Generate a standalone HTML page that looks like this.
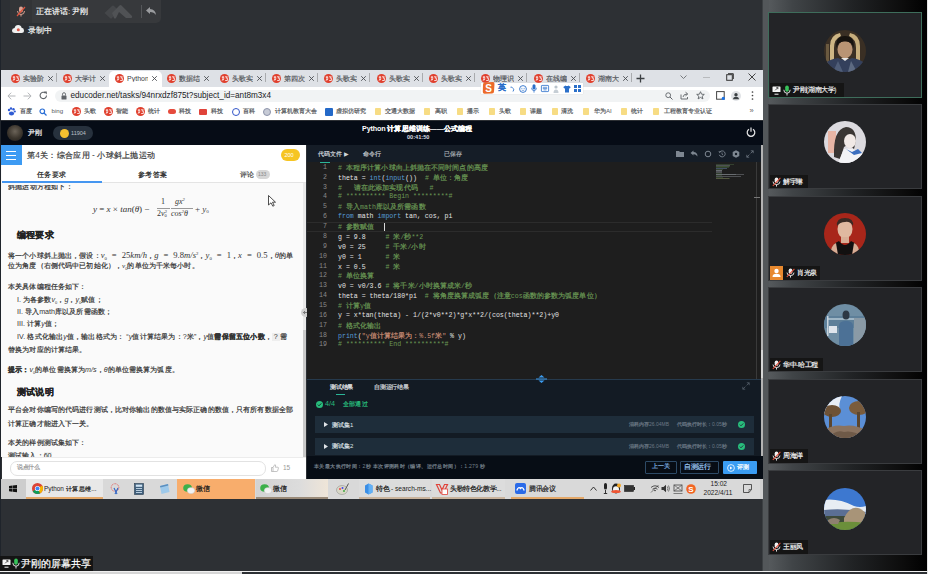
<!DOCTYPE html>
<html><head><meta charset="utf-8">
<style>
*{margin:0;padding:0;box-sizing:border-box}
html,body{width:928px;height:574px;overflow:hidden;background:#2d3034;font-family:"Liberation Sans",sans-serif;color:#fff}
.a{position:absolute}
.t{position:absolute;white-space:nowrap;line-height:1}
svg{position:absolute;overflow:visible}
k{display:inline-block;width:calc(1em + var(--ls,0px));text-align:center;font-style:normal;-webkit-text-stroke:0.2px currentColor}
.fav{position:absolute;width:8px;height:8px;border-radius:50%;background:#e2412f}
.fav:after{content:"";position:absolute;left:1.6px;top:2.2px;width:4.8px;height:3.4px;border:0.9px solid #f6d6d0;border-radius:1.5px}
.code{position:absolute;left:338px;font-family:"Liberation Mono",monospace;font-size:6.58px;line-height:1;white-space:pre;color:#e2e2e2}
.ln{position:absolute;width:20px;left:307px;text-align:right;font-family:"Liberation Mono",monospace;font-size:6.58px;line-height:1;color:#8a8a8a}
.cm{color:#6a9955}
.kw{color:#569cd6}
.st{color:#ce9178}
.mu{position:absolute}
</style></head><body>

<div class="a" style="left:10px;top:0px;width:151px;height:22.5px;background:#37393c;border-radius:0 0 5px 5px"></div>
<div class="a" style="left:10px;top:0px;width:21.5px;height:22.5px;background:#323437;border-radius:0 0 0 5px"></div>
<svg style="left:16px;top:6px" width="10" height="11" viewBox="0 0 10 11"><rect x="3" y="0.5" width="4" height="6" rx="2" fill="#d9a394"/><path d="M1.5 5 Q1.5 8.5 5 8.5 Q8.5 8.5 8.5 5" stroke="#d9a394" fill="none" stroke-width="1"/><path d="M5 8.5 V10.5" stroke="#d9a394" stroke-width="1"/><path d="M1 10 L9 1" stroke="#e0533d" stroke-width="1.2"/></svg>
<div class="t" style="left:36px;top:8px;font-size:8px;color:#f6f6f6;"><k>正</k><k>在</k><k>讲</k><k>话</k>: <k>尹</k><k>刚</k></div>
<svg style="left:104px;top:4px" width="29" height="15" viewBox="0 0 29 15"><path d="M0.5 9 L8 2 Q9 1 10 2 L14 6 L8 14 Q7 15 6 14Z" fill="#45474a"/><path d="M8 9 L15.5 1.5 Q16.5 0.5 17.5 1.5 L28 12 Q28.5 13 27.5 14 L22 14 L15 8 L12 14 Q11 15 10 14Z" fill="#505255"/></svg>
<div class="a" style="left:141px;top:5px;width:1px;height:13px;background:#55575a;"></div>
<svg style="left:146px;top:7px" width="10" height="8" viewBox="0 0 10 8"><path d="M4 0 L0 3.5 L4 7 V5 Q8 5 10 8 Q9.5 2.5 4 2Z" fill="#9a9c9f"/></svg>
<svg style="left:12px;top:25px" width="12" height="8" viewBox="0 0 12 8"><path d="M3 8 Q0 8 0 5.5 Q0 3.2 2.6 3 Q3.2 0 6.2 0 Q9 0 9.6 2.8 Q12 3 12 5.5 Q12 8 9.5 8Z" fill="#f0f0f0"/><circle cx="6.3" cy="4.8" r="1.5" fill="#e05a4a"/></svg>
<div class="t" style="left:28px;top:26.8px;font-size:8px;color:#f0f0f0;"><k>录</k><k>制</k><k>中</k></div>
<div class="a" style="left:0px;top:70px;width:763px;height:17px;background:#dee1e6;"></div>
<svg style="left:10.5px;top:73.5px" width="9" height="9" viewBox="0 0 9 9"><circle cx="4.5" cy="4.5" r="4.5" fill="#e0402e"/><path d="M1.8 3.2H4.2M3 2V6.3M1.8 6.3L4.2 4.8M5 2.8H7.3L6.3 4.2H7.4V6.5H5.2" stroke="#fff" fill="none" stroke-width="0.8"/></svg>
<div class="t" style="left:22.5px;top:74.5px;font-size:7px;color:#55585c;width:21px;overflow:hidden"><k>实</k><k>验</k><k>阶</k><k>段</k></div>
<svg style="left:46.5px;top:74.5px" width="7" height="7" viewBox="0 0 7 7"><path d="M1.2 1.2L5.8 5.8M5.8 1.2L1.2 5.8" stroke="#4a4d51" stroke-width="0.9"/></svg>
<div class="a" style="left:55.5px;top:73px;width:1px;height:9px;background:#a9abae;"></div>
<svg style="left:62.8px;top:73.5px" width="9" height="9" viewBox="0 0 9 9"><circle cx="4.5" cy="4.5" r="4.5" fill="#e0402e"/><path d="M1.8 3.2H4.2M3 2V6.3M1.8 6.3L4.2 4.8M5 2.8H7.3L6.3 4.2H7.4V6.5H5.2" stroke="#fff" fill="none" stroke-width="0.8"/></svg>
<div class="t" style="left:74.8px;top:74.5px;font-size:7px;color:#55585c;width:21px;overflow:hidden"><k>大</k><k>学</k><k>计</k><k>算</k></div>
<svg style="left:98.8px;top:74.5px" width="7" height="7" viewBox="0 0 7 7"><path d="M1.2 1.2L5.8 5.8M5.8 1.2L1.2 5.8" stroke="#4a4d51" stroke-width="0.9"/></svg>
<div class="a" style="left:109px;top:70.5px;width:53px;height:17px;background:#fff;border-radius:5px 5px 0 0"></div>
<svg style="left:115.1px;top:73.5px" width="9" height="9" viewBox="0 0 9 9"><circle cx="4.5" cy="4.5" r="4.5" fill="#e0402e"/><path d="M1.8 3.2H4.2M3 2V6.3M1.8 6.3L4.2 4.8M5 2.8H7.3L6.3 4.2H7.4V6.5H5.2" stroke="#fff" fill="none" stroke-width="0.8"/></svg>
<div class="t" style="left:127.1px;top:74.5px;font-size:7px;color:#3c4043;width:21px;overflow:hidden">Python</div>
<svg style="left:151.1px;top:74.5px" width="7" height="7" viewBox="0 0 7 7"><path d="M1.2 1.2L5.8 5.8M5.8 1.2L1.2 5.8" stroke="#4a4d51" stroke-width="0.9"/></svg>
<svg style="left:167.4px;top:73.5px" width="9" height="9" viewBox="0 0 9 9"><circle cx="4.5" cy="4.5" r="4.5" fill="#e0402e"/><path d="M1.8 3.2H4.2M3 2V6.3M1.8 6.3L4.2 4.8M5 2.8H7.3L6.3 4.2H7.4V6.5H5.2" stroke="#fff" fill="none" stroke-width="0.8"/></svg>
<div class="t" style="left:179.4px;top:74.5px;font-size:7px;color:#55585c;width:21px;overflow:hidden"><k>数</k><k>据</k><k>结</k><k>构</k></div>
<svg style="left:203.4px;top:74.5px" width="7" height="7" viewBox="0 0 7 7"><path d="M1.2 1.2L5.8 5.8M5.8 1.2L1.2 5.8" stroke="#4a4d51" stroke-width="0.9"/></svg>
<svg style="left:219.7px;top:73.5px" width="9" height="9" viewBox="0 0 9 9"><circle cx="4.5" cy="4.5" r="4.5" fill="#e0402e"/><path d="M1.8 3.2H4.2M3 2V6.3M1.8 6.3L4.2 4.8M5 2.8H7.3L6.3 4.2H7.4V6.5H5.2" stroke="#fff" fill="none" stroke-width="0.8"/></svg>
<div class="t" style="left:231.7px;top:74.5px;font-size:7px;color:#55585c;width:21px;overflow:hidden"><k>头</k><k>歌</k><k>实</k><k>践</k></div>
<svg style="left:255.7px;top:74.5px" width="7" height="7" viewBox="0 0 7 7"><path d="M1.2 1.2L5.8 5.8M5.8 1.2L1.2 5.8" stroke="#4a4d51" stroke-width="0.9"/></svg>
<div class="a" style="left:264.7px;top:73px;width:1px;height:9px;background:#a9abae;"></div>
<svg style="left:272.0px;top:73.5px" width="9" height="9" viewBox="0 0 9 9"><circle cx="4.5" cy="4.5" r="4.5" fill="#e0402e"/><path d="M1.8 3.2H4.2M3 2V6.3M1.8 6.3L4.2 4.8M5 2.8H7.3L6.3 4.2H7.4V6.5H5.2" stroke="#fff" fill="none" stroke-width="0.8"/></svg>
<div class="t" style="left:284.0px;top:74.5px;font-size:7px;color:#55585c;width:21px;overflow:hidden"><k>第</k><k>四</k><k>次</k><k>课</k></div>
<svg style="left:308.0px;top:74.5px" width="7" height="7" viewBox="0 0 7 7"><path d="M1.2 1.2L5.8 5.8M5.8 1.2L1.2 5.8" stroke="#4a4d51" stroke-width="0.9"/></svg>
<div class="a" style="left:317.0px;top:73px;width:1px;height:9px;background:#a9abae;"></div>
<svg style="left:324.3px;top:73.5px" width="9" height="9" viewBox="0 0 9 9"><circle cx="4.5" cy="4.5" r="4.5" fill="#e0402e"/><path d="M1.8 3.2H4.2M3 2V6.3M1.8 6.3L4.2 4.8M5 2.8H7.3L6.3 4.2H7.4V6.5H5.2" stroke="#fff" fill="none" stroke-width="0.8"/></svg>
<div class="t" style="left:336.3px;top:74.5px;font-size:7px;color:#55585c;width:21px;overflow:hidden"><k>头</k><k>歌</k><k>实</k><k>践</k></div>
<svg style="left:360.3px;top:74.5px" width="7" height="7" viewBox="0 0 7 7"><path d="M1.2 1.2L5.8 5.8M5.8 1.2L1.2 5.8" stroke="#4a4d51" stroke-width="0.9"/></svg>
<div class="a" style="left:369.3px;top:73px;width:1px;height:9px;background:#a9abae;"></div>
<svg style="left:376.6px;top:73.5px" width="9" height="9" viewBox="0 0 9 9"><circle cx="4.5" cy="4.5" r="4.5" fill="#e0402e"/><path d="M1.8 3.2H4.2M3 2V6.3M1.8 6.3L4.2 4.8M5 2.8H7.3L6.3 4.2H7.4V6.5H5.2" stroke="#fff" fill="none" stroke-width="0.8"/></svg>
<div class="t" style="left:388.6px;top:74.5px;font-size:7px;color:#55585c;width:21px;overflow:hidden"><k>头</k><k>歌</k><k>实</k><k>践</k></div>
<svg style="left:412.6px;top:74.5px" width="7" height="7" viewBox="0 0 7 7"><path d="M1.2 1.2L5.8 5.8M5.8 1.2L1.2 5.8" stroke="#4a4d51" stroke-width="0.9"/></svg>
<div class="a" style="left:421.6px;top:73px;width:1px;height:9px;background:#a9abae;"></div>
<svg style="left:428.9px;top:73.5px" width="9" height="9" viewBox="0 0 9 9"><circle cx="4.5" cy="4.5" r="4.5" fill="#e0402e"/><path d="M1.8 3.2H4.2M3 2V6.3M1.8 6.3L4.2 4.8M5 2.8H7.3L6.3 4.2H7.4V6.5H5.2" stroke="#fff" fill="none" stroke-width="0.8"/></svg>
<div class="t" style="left:440.9px;top:74.5px;font-size:7px;color:#55585c;width:21px;overflow:hidden"><k>头</k><k>歌</k><k>实</k><k>践</k></div>
<svg style="left:464.9px;top:74.5px" width="7" height="7" viewBox="0 0 7 7"><path d="M1.2 1.2L5.8 5.8M5.8 1.2L1.2 5.8" stroke="#4a4d51" stroke-width="0.9"/></svg>
<div class="a" style="left:473.9px;top:73px;width:1px;height:9px;background:#a9abae;"></div>
<svg style="left:481.2px;top:73.5px" width="9" height="9" viewBox="0 0 9 9"><circle cx="4.5" cy="4.5" r="4.5" fill="#e0402e"/><path d="M1.8 3.2H4.2M3 2V6.3M1.8 6.3L4.2 4.8M5 2.8H7.3L6.3 4.2H7.4V6.5H5.2" stroke="#fff" fill="none" stroke-width="0.8"/></svg>
<div class="t" style="left:493.2px;top:74.5px;font-size:7px;color:#55585c;width:21px;overflow:hidden"><k>物</k><k>理</k><k>识</k><k>别</k></div>
<svg style="left:517.2px;top:74.5px" width="7" height="7" viewBox="0 0 7 7"><path d="M1.2 1.2L5.8 5.8M5.8 1.2L1.2 5.8" stroke="#4a4d51" stroke-width="0.9"/></svg>
<div class="a" style="left:526.2px;top:73px;width:1px;height:9px;background:#a9abae;"></div>
<svg style="left:533.5px;top:73.5px" width="9" height="9" viewBox="0 0 9 9"><circle cx="4.5" cy="4.5" r="4.5" fill="#e0402e"/><path d="M1.8 3.2H4.2M3 2V6.3M1.8 6.3L4.2 4.8M5 2.8H7.3L6.3 4.2H7.4V6.5H5.2" stroke="#fff" fill="none" stroke-width="0.8"/></svg>
<div class="t" style="left:545.5px;top:74.5px;font-size:7px;color:#55585c;width:21px;overflow:hidden"><k>在</k><k>线</k><k>编</k><k>程</k></div>
<svg style="left:569.5px;top:74.5px" width="7" height="7" viewBox="0 0 7 7"><path d="M1.2 1.2L5.8 5.8M5.8 1.2L1.2 5.8" stroke="#4a4d51" stroke-width="0.9"/></svg>
<div class="a" style="left:578.5px;top:73px;width:1px;height:9px;background:#a9abae;"></div>
<svg style="left:585.8px;top:73.5px" width="9" height="9" viewBox="0 0 9 9"><circle cx="4.5" cy="4.5" r="4.5" fill="#e0402e"/><path d="M1.8 3.2H4.2M3 2V6.3M1.8 6.3L4.2 4.8M5 2.8H7.3L6.3 4.2H7.4V6.5H5.2" stroke="#fff" fill="none" stroke-width="0.8"/></svg>
<div class="t" style="left:597.8px;top:74.5px;font-size:7px;color:#55585c;width:21px;overflow:hidden"><k>湖</k><k>南</k><k>大</k><k>学</k></div>
<svg style="left:621.8px;top:74.5px" width="7" height="7" viewBox="0 0 7 7"><path d="M1.2 1.2L5.8 5.8M5.8 1.2L1.2 5.8" stroke="#4a4d51" stroke-width="0.9"/></svg>
<div class="a" style="left:630.8px;top:73px;width:1px;height:9px;background:#a9abae;"></div>
<svg style="left:636px;top:73.5px" width="9" height="9" viewBox="0 0 9 9"><path d="M4.5 0.5V8.5M0.5 4.5H8.5" stroke="#3c4043" stroke-width="1.3"/></svg>
<svg style="left:680px;top:75px" width="7" height="5" viewBox="0 0 7 5"><path d="M0.5 0.5L3.5 3.5L6.5 0.5" stroke="#6b6e72" fill="none" stroke-width="0.9"/></svg>
<div class="a" style="left:703px;top:77px;width:7px;height:1px;background:#b8babd;"></div>
<svg style="left:726px;top:73px" width="8" height="8" viewBox="0 0 8 8"><rect x="0.7" y="1.7" width="5.6" height="5.6" fill="none" stroke="#333" stroke-width="1"/><path d="M2 0.7H7.3V6" stroke="#333" fill="none" stroke-width="1"/></svg>
<svg style="left:748px;top:73px" width="8" height="8" viewBox="0 0 8 8"><path d="M0.5 0.5L7.5 7.5M7.5 0.5L0.5 7.5" stroke="#333" stroke-width="0.9"/></svg>
<div class="a" style="left:0px;top:87px;width:763px;height:33px;background:#ffffff;"></div>
<svg style="left:7px;top:91.5px" width="9" height="8" viewBox="0 0 9 8"><path d="M8.5 4H1M4.2 0.7L0.9 4L4.2 7.3" stroke="#b4b6b9" fill="none" stroke-width="1"/></svg>
<svg style="left:23px;top:91.5px" width="9" height="8" viewBox="0 0 9 8"><path d="M0.5 4H8M4.8 0.7L8.1 4L4.8 7.3" stroke="#b4b6b9" fill="none" stroke-width="1"/></svg>
<svg style="left:39px;top:91px" width="9" height="9" viewBox="0 0 9 9"><path d="M7.5 4.5A3.2 3.2 0 1 1 6.4 2" stroke="#5f6368" fill="none" stroke-width="1.1"/><path d="M4.8 0.6H7.8V3.6Z" fill="#5f6368"/></svg>
<div class="a" style="left:55px;top:89.5px;width:655px;height:12.5px;background:#f1f3f4;border-radius:7px"></div>
<svg style="left:60.5px;top:91.5px" width="6" height="8" viewBox="0 0 6 8"><path d="M1.5 3.5V2.2A1.5 1.5 0 0 1 4.5 2.2V3.5" stroke="#5f6368" fill="none" stroke-width="0.9"/><rect x="0.5" y="3.5" width="5" height="4" rx="0.6" fill="#5f6368"/></svg>
<div class="t" style="left:70.5px;top:91.5px;font-size:8.2px;color:#202124;">educoder.net/tasks/94nrxdzf875t?subject_id=ant8m3x4</div>
<svg style="left:665px;top:91.5px" width="8" height="8" viewBox="0 0 8 8"><circle cx="3.2" cy="3.2" r="2.4" stroke="#5f6368" fill="none" stroke-width="0.9"/><path d="M5 5L7.5 7.5" stroke="#5f6368" stroke-width="1"/></svg>
<svg style="left:680px;top:91px" width="9" height="9" viewBox="0 0 9 9"><path d="M1 3.5V8H7.5V6" stroke="#5f6368" fill="none" stroke-width="0.9"/><path d="M3 6Q3.5 3 7 3M5.5 1.2L7.8 3L5.5 4.8" stroke="#5f6368" fill="none" stroke-width="0.9"/></svg>
<svg style="left:696px;top:91px" width="9" height="9" viewBox="0 0 9 9"><path d="M4.5 0.7L5.6 3.2L8.3 3.4L6.2 5.2L6.9 7.9L4.5 6.4L2.1 7.9L2.8 5.2L0.7 3.4L3.4 3.2Z" stroke="#5f6368" fill="none" stroke-width="0.9"/></svg>
<svg style="left:716px;top:91px" width="9" height="9" viewBox="0 0 9 9"><rect x="0.6" y="0.6" width="7.6" height="7.6" stroke="#444" fill="none" stroke-width="1"/><rect x="5" y="0.6" width="3.2" height="7.6" fill="none"/><circle cx="7.3" cy="7.4" r="1.6" fill="#1a73e8"/></svg>
<svg style="left:731px;top:90.5px" width="10" height="10" viewBox="0 0 10 10"><circle cx="5" cy="5" r="5" fill="#e1e3e6"/><circle cx="5" cy="3.8" r="1.7" fill="#3c4043"/><path d="M1.8 8.2Q2.5 5.8 5 5.8Q7.5 5.8 8.2 8.2Z" fill="#3c4043"/></svg>
<svg style="left:751px;top:91px" width="3" height="9" viewBox="0 0 3 9"><circle cx="1.5" cy="1" r="0.85" fill="#444"/><circle cx="1.5" cy="4.5" r="0.85" fill="#444"/><circle cx="1.5" cy="8" r="0.85" fill="#444"/></svg>
<div class="a" style="left:481px;top:82.5px;width:102px;height:11.5px;background:#ffffff;box-shadow:0 0 1px #ccc"></div>
<svg style="left:481.5px;top:82px" width="13" height="12" viewBox="0 0 13 12"><path d="M1 2.5Q1 0.5 3 0.5L11 0Q12.5 0 12.5 2L12 9.5Q12 11.5 10 11.5L2.5 11.8Q0.8 11.8 0.8 10Z" fill="#ec6a2a"/><text x="6.6" y="9.6" font-size="10" font-weight="bold" text-anchor="middle" fill="#fff" font-family="Liberation Sans">S</text></svg>
<div class="t" style="left:497.5px;top:84.3px;font-size:8px;color:#2a6fc9;font-weight:bold"><k>英</k></div>
<svg style="left:510px;top:85.5px" width="5" height="6" viewBox="0 0 5 6"><path d="M0.5 1.2Q2 0.5 2.5 2" stroke="#2a6fc9" fill="none" stroke-width="0.9"/><path d="M3 2.2Q4.5 3.5 3 5.5" stroke="#2a6fc9" fill="none" stroke-width="0.9"/></svg>
<svg style="left:519px;top:84.5px" width="8" height="8" viewBox="0 0 8 8"><circle cx="4" cy="4" r="3.4" stroke="#2a6fc9" fill="none" stroke-width="0.9"/><circle cx="2.9" cy="3.3" r="0.5" fill="#2a6fc9"/><circle cx="5.1" cy="3.3" r="0.5" fill="#2a6fc9"/><path d="M2.6 5Q4 6 5.4 5" stroke="#2a6fc9" fill="none" stroke-width="0.6"/></svg>
<svg style="left:531px;top:84px" width="6" height="9" viewBox="0 0 6 9"><rect x="1.5" y="0.3" width="3" height="5.2" rx="1.5" fill="#2a6fc9"/><path d="M0.6 3.8Q0.6 6.6 3 6.6Q5.4 6.6 5.4 3.8M3 6.6V8.6" stroke="#2a6fc9" fill="none" stroke-width="0.8"/></svg>
<svg style="left:541px;top:85px" width="8" height="7" viewBox="0 0 8 7"><rect x="0.4" y="0.4" width="7.2" height="6.2" rx="0.6" stroke="#2a6fc9" fill="none" stroke-width="0.8"/><path d="M1.8 2.3H6.2M1.8 3.6H6.2M2.5 4.9H5.5" stroke="#2a6fc9" stroke-width="0.7"/></svg>
<svg style="left:553px;top:84.5px" width="7" height="8" viewBox="0 0 7 8"><circle cx="3" cy="2" r="1.6" fill="#b9c3cc"/><path d="M0.5 8Q0.5 4.5 3 4.5Q5.5 4.5 5.5 8Z" fill="#c6ced5"/></svg>
<svg style="left:562.5px;top:84.5px" width="8" height="8" viewBox="0 0 8 8"><path d="M2.5 0.5L0.3 2L1.2 3.6L2 3.2V7.5H6V3.2L6.8 3.6L7.7 2L5.5 0.5Q4 1.6 2.5 0.5Z" fill="#2a6fc9"/></svg>
<svg style="left:573.5px;top:84.5px" width="7" height="7" viewBox="0 0 7 7"><rect x="0" y="0" width="3" height="3" fill="#2a6fc9"/><rect x="4" y="0" width="3" height="3" fill="#2a6fc9"/><rect x="0" y="4" width="3" height="3" fill="#2a6fc9"/><rect x="4" y="4" width="3" height="3" fill="#2a6fc9"/></svg>
<svg style="left:7px;top:107px" width="9" height="9" viewBox="0 0 9 9"><circle cx="2" cy="3" r="1.2" fill="#2f5bd3"/><circle cx="4" cy="1.5" r="1.2" fill="#2f5bd3"/><circle cx="6.5" cy="2.2" r="1.2" fill="#2f5bd3"/><circle cx="7.8" cy="4.5" r="1.1" fill="#2f5bd3"/><ellipse cx="4.5" cy="6.5" rx="2.6" ry="2" fill="#2f5bd3"/></svg>
<div class="t" style="left:19.5px;top:108px;font-size:6.1px;color:#55585b;"><k>百</k><k>度</k></div>
<svg style="left:39px;top:107.5px" width="8" height="8" viewBox="0 0 8 8"><circle cx="3.3" cy="3.3" r="2.3" stroke="#2b6fd6" fill="none" stroke-width="1.2"/><path d="M5 5L7.5 7.5" stroke="#2b6fd6" stroke-width="1.3"/></svg>
<div class="t" style="left:51.5px;top:108px;font-size:6.1px;color:#55585b;">bing</div>
<svg style="left:71.5px;top:107px" width="9" height="9" viewBox="0 0 9 9"><circle cx="4.5" cy="4.5" r="4.5" fill="#e0402e"/><path d="M1.8 3.2H4.2M3 2V6.3M1.8 6.3L4.2 4.8M5 2.8H7.3L6.3 4.2H7.4V6.5H5.2" stroke="#fff" fill="none" stroke-width="0.8"/></svg>
<div class="t" style="left:84px;top:108px;font-size:6.1px;color:#55585b;"><k>头</k><k>歌</k></div>
<svg style="left:103.5px;top:107px" width="9" height="9" viewBox="0 0 9 9"><circle cx="4.5" cy="4.5" r="4.5" fill="#e0402e"/><path d="M1.8 3.2H4.2M3 2V6.3M1.8 6.3L4.2 4.8M5 2.8H7.3L6.3 4.2H7.4V6.5H5.2" stroke="#fff" fill="none" stroke-width="0.8"/></svg>
<div class="t" style="left:115.5px;top:108px;font-size:6.1px;color:#55585b;"><k>智</k><k>能</k></div>
<svg style="left:135.5px;top:107px" width="9" height="9" viewBox="0 0 9 9"><circle cx="4.5" cy="4.5" r="4.5" fill="#e0402e"/><path d="M1.8 3.2H4.2M3 2V6.3M1.8 6.3L4.2 4.8M5 2.8H7.3L6.3 4.2H7.4V6.5H5.2" stroke="#fff" fill="none" stroke-width="0.8"/></svg>
<div class="t" style="left:148px;top:108px;font-size:6.1px;color:#55585b;"><k>统</k><k>计</k></div>
<div class="a" style="left:168px;top:109px;width:8px;height:5px;border-radius:3px;background:#e64b3c"></div>
<div class="t" style="left:179px;top:108px;font-size:6.1px;color:#55585b;"><k>科</k><k>技</k></div>
<div class="a" style="left:199px;top:108.5px;width:8px;height:6px;background:#e0433a;border-radius:1px"></div>
<div class="t" style="left:211px;top:108px;font-size:6.1px;color:#55585b;"><k>科</k><k>技</k></div>
<div class="a" style="left:232px;top:108px;width:8px;height:8px;border-radius:50%;border:1.5px solid #3356c9"></div>
<div class="t" style="left:243px;top:108px;font-size:6.1px;color:#55585b;"><k>百</k><k>科</k></div>
<div class="a" style="left:263px;top:108px;width:8px;height:8px;border-radius:50%;background:#c7cbd6;border:1.3px solid #8d94aa"></div>
<div class="t" style="left:274.5px;top:108px;font-size:6.1px;color:#55585b;"><k>计</k><k>算</k><k>机</k><k>教</k><k>育</k><k>大</k><k>会</k></div>
<div class="a" style="left:324.6px;top:107.5px;width:8px;height:8px;background:#2469c8;border-radius:1px"></div>
<div class="t" style="left:336px;top:108px;font-size:6.1px;color:#55585b;"><k>虚</k><k>拟</k><k>仿</k><k>研</k><k>究</k></div>
<div class="a" style="left:375px;top:107.5px;width:6.2px;height:7.5px;background:#f7dc84;border-radius:0.8px"></div>
<div class="t" style="left:385px;top:108px;font-size:6.1px;color:#55585b;"><k>交</k><k>通</k><k>大</k><k>数</k><k>据</k></div>
<div class="a" style="left:424px;top:107.5px;width:6.2px;height:7.5px;background:#f7dc84;border-radius:0.8px"></div>
<div class="t" style="left:434.5px;top:108px;font-size:6.1px;color:#55585b;"><k>高</k><k>职</k></div>
<div class="a" style="left:456.5px;top:107.5px;width:6.2px;height:7.5px;background:#f7dc84;border-radius:0.8px"></div>
<div class="t" style="left:466.8px;top:108px;font-size:6.1px;color:#55585b;"><k>播</k><k>示</k></div>
<div class="a" style="left:489px;top:107.5px;width:6.2px;height:7.5px;background:#f7dc84;border-radius:0.8px"></div>
<div class="t" style="left:499px;top:108px;font-size:6.1px;color:#55585b;"><k>头</k><k>歌</k></div>
<div class="a" style="left:520px;top:107.5px;width:6.2px;height:7.5px;background:#f7dc84;border-radius:0.8px"></div>
<div class="t" style="left:530px;top:108px;font-size:6.1px;color:#55585b;"><k>课</k><k>题</k></div>
<div class="a" style="left:551.5px;top:107.5px;width:6.2px;height:7.5px;background:#f7dc84;border-radius:0.8px"></div>
<div class="t" style="left:561px;top:108px;font-size:6.1px;color:#55585b;"><k>清</k><k>洗</k></div>
<div class="a" style="left:583px;top:107.5px;width:6.2px;height:7.5px;background:#f7dc84;border-radius:0.8px"></div>
<div class="t" style="left:593.7px;top:108px;font-size:6.1px;color:#55585b;"><k>华</k><k>为</k>AI</div>
<div class="a" style="left:621px;top:107.5px;width:6.2px;height:7.5px;background:#f7dc84;border-radius:0.8px"></div>
<div class="t" style="left:631px;top:108px;font-size:6.1px;color:#55585b;"><k>统</k><k>计</k></div>
<div class="a" style="left:653px;top:107.5px;width:6.2px;height:7.5px;background:#f7dc84;border-radius:0.8px"></div>
<div class="t" style="left:663.5px;top:108px;font-size:6.1px;color:#55585b;"><k>工</k><k>程</k><k>教</k><k>育</k><k>专</k><k>业</k><k>认</k><k>证</k></div>
<div class="t" style="left:749.5px;top:107px;font-size:7.5px;color:#666;">»</div>
<div class="a" style="left:0px;top:120.8px;width:763px;height:24.2px;background:#060c16;"></div>
<div class="a" style="left:7px;top:125px;width:16px;height:16px;border-radius:50%;background:radial-gradient(circle at 50% 40%,#6b6358 0,#3b352d 55%,#1f1c19 100%)"></div>
<div class="t" style="left:28px;top:129px;font-size:7.3px;color:#f4f4f4;"><k>尹</k><k>刚</k></div>
<div class="a" style="left:53px;top:126px;width:40px;height:14px;background:#27313d;border-radius:7px"></div>
<div class="a" style="left:59.5px;top:128.5px;width:9px;height:9px;border-radius:50%;background:#f5c02f"></div>
<div class="t" style="left:71px;top:130.5px;font-size:5.5px;color:#b9c0c8;">11904</div>
<div class="t" style="left:362px;top:125px;font-size:7.2px;color:#ffffff;font-weight:bold;letter-spacing:-0.15px;--ls:-0.15px">Python <k>计</k><k>算</k><k>思</k><k>维</k><k>训</k><k>练</k>——<k>公</k><k>式</k><k>编</k><k>程</k></div>
<div class="t" style="left:407px;top:135px;font-size:5.6px;color:#d8dde3;font-weight:bold">00:41:50</div>
<svg style="left:746px;top:127px" width="10" height="10" viewBox="0 0 10 10"><path d="M3 2.3A3.8 3.8 0 1 0 7 2.3" stroke="#e8e8e8" fill="none" stroke-width="1.2"/><path d="M5 0.5V4.8" stroke="#e8e8e8" stroke-width="1.2"/></svg>
<div class="a" style="left:0px;top:145px;width:306px;height:312px;background:#fafafa;"></div>
<div class="a" style="left:0px;top:145px;width:1px;height:334px;background:#2a3038;"></div>
<div class="a" style="left:1px;top:145px;width:20.5px;height:20px;background:#3d9bf3;"></div>
<div class="a" style="left:6px;top:150.5px;width:10px;height:1.2px;background:#ffffff;"></div>
<div class="a" style="left:6px;top:154.5px;width:10px;height:1.2px;background:#ffffff;"></div>
<div class="a" style="left:6px;top:158.5px;width:10px;height:1.2px;background:#ffffff;"></div>
<div class="a" style="left:21.5px;top:145px;width:284.5px;height:20px;background:#ffffff;"></div>
<div class="t" style="left:27px;top:151px;font-size:8.3px;color:#3a3a3a;"><k>第</k>4<k>关</k><k>：</k><k>综</k><k>合</k><k>应</k><k>用</k> - <k>小</k><k>球</k><k>斜</k><k>上</k><k>抛</k><k>运</k><k>动</k></div>
<div class="a" style="left:281px;top:149px;width:18.5px;height:12px;background:#f6c523;border-radius:6px"></div>
<div class="t" style="left:284.5px;top:152.5px;font-size:5.5px;color:#ffffff;">200</div>
<div class="a" style="left:1.5px;top:165px;width:304.5px;height:18px;background:#ffffff;border-bottom:1px solid #e4e4e4"></div>
<div class="a" style="left:1.5px;top:181px;width:100.5px;height:2px;background:#4596f0;"></div>
<div class="t" style="left:37px;top:170.5px;font-size:7.3px;color:#222;"><k>任</k><k>务</k><k>要</k><k>求</k></div>
<div class="t" style="left:138px;top:170.5px;font-size:7.3px;color:#222;"><k>参</k><k>考</k><k>答</k><k>案</k></div>
<div class="t" style="left:240px;top:170.5px;font-size:7.3px;color:#444;"><k>评</k><k>论</k></div>
<div class="a" style="left:256px;top:169.5px;width:13.5px;height:9px;background:#d6d6d6;border-radius:5px"></div>
<div class="t" style="left:258px;top:171.5px;font-size:5px;color:#888;">133</div>
<div class="a" style="left:303px;top:183px;width:3px;height:274px;background:#e9e9e9;"></div>
<div class="a" style="left:303px;top:330px;width:3px;height:127px;background:#c9c9c9;"></div>
<div class="t" style="left:8px;top:183px;font-size:7.2px;color:#333;clip-path:inset(2px 0 0 0)"><k>斜</k><k>抛</k><k>运</k><k>动</k><k>方</k><k>程</k><k>如</k><k>下</k><k>：</k></div>
<div class="t" style="left:93px;top:205px;font-family:'Liberation Serif',serif;font-size:9px;color:#333;font-style:italic">y <span style="font-style:normal">=</span> x <span style="font-style:normal">×</span> tan<span style="font-style:normal">(</span>θ<span style="font-style:normal">) −</span></div>
<div class="t" style="left:161px;top:198px;font-family:'Liberation Serif',serif;font-size:8px;color:#333">1</div>
<div class="a" style="left:157px;top:207.8px;width:13px;height:0.6px;background:#999;"></div>
<div class="t" style="left:157px;top:210px;font-family:'Liberation Serif',serif;font-size:8px;color:#333">2<i>v</i><span style="font-size:4.5px;vertical-align:-1px">0</span><span style="font-size:4.5px;vertical-align:3px;margin-left:-2px">2</span></div>
<div class="t" style="left:175px;top:198px;font-family:'Liberation Serif',serif;font-size:8px;color:#333;font-style:italic">gx<span style="font-size:4.5px;vertical-align:3px">2</span></div>
<div class="a" style="left:171px;top:207.8px;width:21.5px;height:0.6px;background:#999;"></div>
<div class="t" style="left:171px;top:210px;font-family:'Liberation Serif',serif;font-size:8px;color:#333;font-style:italic">cos<span style="font-size:4.5px;vertical-align:3px">2</span>θ</div>
<div class="t" style="left:195px;top:205px;font-family:'Liberation Serif',serif;font-size:9px;color:#444">+ <i>y</i><span style="font-size:5px;vertical-align:-1px">0</span></div>
<svg style="left:268px;top:195px" width="8" height="12" viewBox="0 0 8 12"><path d="M0.5 0.5V10L3 7.8L4.8 11.2L6.2 10.5L4.5 7.2H7.5Z" fill="#fff" stroke="#222" stroke-width="0.8"/></svg>
<div class="t" style="left:17px;top:230.5px;font-size:9.2px;color:#222;font-weight:bold"><k>编</k><k>程</k><k>要</k><k>求</k></div>
<div class="t" style="left:8px;top:251px;font-size:7.14px;color:#333;"><k>将</k><k>一</k><k>个</k><k>小</k><k>球</k><k>斜</k><k>上</k><k>抛</k><k>出</k><k>，</k><k>假</k><k>设</k><k>：</k><span style="font-family:Liberation Serif;font-size:8.6px"><i>v</i><span style="font-size:4.8px;vertical-align:-1.5px">0</span></span><span style="font-family:Liberation Serif;font-size:8.6px;margin:0 5px">=</span><span style="font-family:Liberation Serif;font-size:8.6px">25<i>km/h</i></span><k>，</k><span style="font-family:Liberation Serif;font-size:8.6px"><i>g</i></span><span style="font-family:Liberation Serif;font-size:8.6px;margin:0 5px">=</span><span style="font-family:Liberation Serif;font-size:8.6px">9.8<i>m/s</i><span style="font-size:4.8px;vertical-align:3px">2</span></span><k>，</k><span style="font-family:Liberation Serif;font-size:8.6px"><i>y</i><span style="font-size:4.8px;vertical-align:-1.5px">0</span></span><span style="font-family:Liberation Serif;font-size:8.6px;margin:0 5px">=</span><span style="font-family:Liberation Serif;font-size:8.6px">1</span><k>，</k><span style="font-family:Liberation Serif;font-size:8.6px"><i>x</i></span><span style="font-family:Liberation Serif;font-size:8.6px;margin:0 5px">=</span><span style="font-family:Liberation Serif;font-size:8.6px">0.5</span><k>，</k><span style="font-family:Liberation Serif;font-size:8.6px"><i>θ</i></span><k>的</k><k>单</k></div>
<div class="t" style="left:8px;top:263px;font-size:7.14px;color:#333;"><k>位</k><k>为</k><k>角</k><k>度</k><k>（</k><k>右</k><k>侧</k><k>代</k><k>码</k><k>中</k><k>已</k><k>初</k><k>始</k><k>化</k><k>）</k><k>，</k><i style="font-family:Liberation Serif">v</i><sub style="font-size:4px">0</sub><k>的</k><k>单</k><k>位</k><k>为</k><k>千</k><k>米</k><k>每</k><k>小</k><k>时</k><k>。</k></div>
<div class="t" style="left:8px;top:284px;font-size:7.14px;color:#333;"><k>本</k><k>关</k><k>具</k><k>体</k><k>编</k><k>程</k><k>任</k><k>务</k><k>如</k><k>下</k><k>：</k></div>
<div class="t" style="left:17px;top:296.5px;font-size:7.14px;color:#333;">I. <k>为</k><k>各</k><k>参</k><k>数</k><i>v</i><sub style="font-size:4px">0</sub><k>，</k><i>g</i><k>，</k><i>y</i><sub style="font-size:4px">0</sub><k>赋</k><k>值</k><k>；</k></div>
<div class="t" style="left:17px;top:308.5px;font-size:7.14px;color:#333;">II. <k>导</k><k>入</k>math<k>库</k><k>以</k><k>及</k><k>所</k><k>需</k><k>函</k><k>数</k><k>；</k></div>
<div class="t" style="left:17px;top:321px;font-size:7.14px;color:#333;">III. <k>计</k><k>算</k><i>y</i><k>值</k><k>；</k></div>
<div class="t" style="left:17px;top:333.5px;font-size:7.14px;color:#333;letter-spacing:0.05px;--ls:0.05px">IV. <k>格</k><k>式</k><k>化</k><k>输</k><k>出</k><i>y</i><k>值</k><k>，</k><k>输</k><k>出</k><k>格</k><k>式</k><k>为</k><k>：</k>  “<i>y</i><k>值</k><k>计</k><k>算</k><k>结</k><k>果</k><k>为</k><k>：</k>?<k>米</k>”<k>，</k><i>y</i><k>值</k><b><k>需</k><k>保</k><k>留</k><k>五</k><k>位</k><k>小</k><k>数</k></b><k>，</k><span style="background:#eee">&nbsp;?&nbsp;</span><k>需</k></div>
<div class="t" style="left:8px;top:346.5px;font-size:7.14px;color:#333;"><k>替</k><k>换</k><k>为</k><k>对</k><k>应</k><k>的</k><k>计</k><k>算</k><k>结</k><k>果</k><k>。</k></div>
<div class="t" style="left:8px;top:366.5px;font-size:7.14px;color:#333;"><b><k>提</k><k>示</k><k>：</k></b><i>v</i><sub style="font-size:4px">0</sub><k>的</k><k>单</k><k>位</k><k>需</k><k>换</k><k>算</k><k>为</k><i>m/s</i><k>，</k><i>θ</i><k>的</k><k>单</k><k>位</k><k>需</k><k>换</k><k>算</k><k>为</k><k>弧</k><k>度</k><k>。</k></div>
<div class="t" style="left:17px;top:387.5px;font-size:9.2px;color:#222;font-weight:bold"><k>测</k><k>试</k><k>说</k><k>明</k></div>
<div class="t" style="left:8px;top:406.5px;font-size:7.14px;color:#333;"><k>平</k><k>台</k><k>会</k><k>对</k><k>你</k><k>编</k><k>写</k><k>的</k><k>代</k><k>码</k><k>进</k><k>行</k><k>测</k><k>试</k><k>，</k><k>比</k><k>对</k><k>你</k><k>输</k><k>出</k><k>的</k><k>数</k><k>值</k><k>与</k><k>实</k><k>际</k><k>正</k><k>确</k><k>的</k><k>数</k><k>值</k><k>，</k><k>只</k><k>有</k><k>所</k><k>有</k><k>数</k><k>据</k><k>全</k><k>部</k></div>
<div class="t" style="left:8px;top:420.5px;font-size:7.14px;color:#333;"><k>计</k><k>算</k><k>正</k><k>确</k><k>才</k><k>能</k><k>进</k><k>入</k><k>下</k><k>一</k><k>关</k><k>。</k></div>
<div class="t" style="left:8px;top:439.5px;font-size:7.14px;color:#333;"><k>本</k><k>关</k><k>的</k><k>样</k><k>例</k><k>测</k><k>试</k><k>集</k><k>如</k><k>下</k><k>：</k></div>
<div class="t" style="left:8px;top:453px;font-size:7.14px;color:#333;"><k>测</k><k>试</k><k>输</k><k>入</k><k>：</k><span style="background:#eee">60</span></div>
<div class="a" style="left:1.5px;top:457px;width:304.5px;height:22px;background:#ffffff;border-top:1px solid #ececec"></div>
<div class="a" style="left:10px;top:461px;width:256px;height:14.5px;background:#ffffff;border:1px solid #e2e2e2;border-radius:7px"></div>
<div class="t" style="left:17px;top:465px;font-size:5.5px;color:#999;"><k>说</k><k>点</k><k>什</k><k>么</k></div>
<svg style="left:271px;top:463.5px" width="8" height="8" viewBox="0 0 8 8"><path d="M0.5 3.5H2V7.5H0.5Z M2 3.5L3.8 0.6Q4.8 0.6 4.6 2.2L4.3 3.2H7Q7.6 3.4 7.4 4.2L6.6 7Q6.4 7.5 5.8 7.5H2" stroke="#aaa" fill="none" stroke-width="0.7"/></svg>
<div class="t" style="left:283px;top:465px;font-size:6.5px;color:#999;">15</div>
<div class="a" style="left:305.5px;top:145px;width:1.5px;height:334px;background:#2c3035;"></div>
<div class="a" style="left:301px;top:308px;width:10px;height:9px;border-radius:50%;background:#cfcfcf"></div>
<svg style="left:302.5px;top:310px" width="7" height="5" viewBox="0 0 7 5"><path d="M0.5 2.5H6.5M2 1L0.5 2.5L2 4M5 1L6.5 2.5L5 4" stroke="#555" fill="none" stroke-width="0.7"/></svg>
<div class="a" style="left:307px;top:145px;width:456px;height:17.3px;background:#151d27;"></div>
<div class="t" style="left:318px;top:151px;font-size:6px;color:#d0d5db;"><k>代</k><k>码</k><k>文</k><k>件</k> ▶</div>
<div class="t" style="left:363px;top:151px;font-size:6px;color:#c0c5cb;"><k>命</k><k>令</k><k>行</k></div>
<div class="t" style="left:444px;top:151px;font-size:6px;color:#a8adb3;"><k>已</k><k>保</k><k>存</k></div>
<svg style="left:676px;top:150px" width="8" height="7" viewBox="0 0 8 7"><path d="M0 1H3L4 2H8V7H0Z" fill="#7e8791"/></svg>
<svg style="left:690px;top:150px" width="8" height="7" viewBox="0 0 8 7"><path d="M3.5 0.5L0.5 3L3.5 5.5V4Q6 4 7.5 6.5Q7.5 2 3.5 2Z" fill="#7e8791"/></svg>
<svg style="left:704px;top:150px" width="8" height="8" viewBox="0 0 8 8"><circle cx="4" cy="4" r="2.8" stroke="#7e8791" fill="none" stroke-width="1"/></svg>
<svg style="left:718px;top:150px" width="8" height="8" viewBox="0 0 8 8"><path d="M1.3 4.8A3 3 0 1 0 2 1.8" stroke="#7e8791" fill="none" stroke-width="0.9"/><path d="M4 2.5V4.3L5.2 5" stroke="#7e8791" fill="none" stroke-width="0.8"/><path d="M0.3 1.5L2.5 1.2L2 3.2Z" fill="#7e8791"/></svg>
<svg style="left:732px;top:150px" width="8" height="8" viewBox="0 0 8 8"><path d="M4 0.3L7.3 2.1V5.9L4 7.7L0.7 5.9V2.1Z" fill="#7e8791"/><circle cx="4" cy="4" r="1.2" fill="#151d27"/></svg>
<svg style="left:746px;top:150px" width="8" height="8" viewBox="0 0 8 8"><path d="M4.8 0.8H7.2V3.2M7.2 0.8L4.6 3.4M3.2 7.2H0.8V4.8M0.8 7.2L3.4 4.6" stroke="#6e7781" fill="none" stroke-width="0.8"/></svg>
<div class="a" style="left:307px;top:162px;width:456px;height:217px;background:#1e1e1e;"></div>
<div class="a" style="left:319.5px;top:162px;width:10px;height:1.2px;background:#2bb597;"></div>
<div class="a" style="left:716px;top:164.0px;width:18.2px;height:0.35px;background:#4d6a45;opacity:0.45"></div>
<div class="a" style="left:716px;top:164.8px;width:14.0px;height:0.35px;background:#8a8f95;opacity:0.45"></div>
<div class="a" style="left:716px;top:165.6px;width:14.0px;height:0.35px;background:#4d6a45;opacity:0.45"></div>
<div class="a" style="left:716px;top:166.4px;width:12.6px;height:0.35px;background:#4d6a45;opacity:0.45"></div>
<div class="a" style="left:716px;top:167.2px;width:12.6px;height:0.35px;background:#4d6a45;opacity:0.45"></div>
<div class="a" style="left:716px;top:168.0px;width:10.5px;height:0.35px;background:#6d8fb5;opacity:0.45"></div>
<div class="a" style="left:716px;top:168.8px;width:7.0px;height:0.35px;background:#4d6a45;opacity:0.45"></div>
<div class="a" style="left:716px;top:169.6px;width:5.6px;height:0.35px;background:#8a8f95;opacity:0.45"></div>
<div class="a" style="left:716px;top:170.4px;width:5.6px;height:0.35px;background:#8a8f95;opacity:0.45"></div>
<div class="a" style="left:716px;top:171.2px;width:5.6px;height:0.35px;background:#8a8f95;opacity:0.45"></div>
<div class="a" style="left:716px;top:172.0px;width:5.6px;height:0.35px;background:#8a8f95;opacity:0.45"></div>
<div class="a" style="left:716px;top:172.8px;width:5.6px;height:0.35px;background:#4d6a45;opacity:0.45"></div>
<div class="a" style="left:716px;top:173.6px;width:19.599999999999998px;height:0.35px;background:#8a8f95;opacity:0.45"></div>
<div class="a" style="left:716px;top:174.4px;width:28.0px;height:0.35px;background:#8a8f95;opacity:0.45"></div>
<div class="a" style="left:716px;top:175.2px;width:5.6px;height:0.35px;background:#4d6a45;opacity:0.45"></div>
<div class="a" style="left:716px;top:176.0px;width:24.5px;height:0.35px;background:#8a8f95;opacity:0.45"></div>
<div class="a" style="left:716px;top:176.8px;width:7.0px;height:0.35px;background:#4d6a45;opacity:0.45"></div>
<div class="a" style="left:716px;top:177.6px;width:12.6px;height:0.35px;background:#a08060;opacity:0.45"></div>
<div class="a" style="left:716px;top:178.4px;width:14.0px;height:0.35px;background:#4d6a45;opacity:0.45"></div>
<div class="a" style="left:755.5px;top:162px;width:0.6px;height:217px;background:#3a3a3a;"></div>
<div class="a" style="left:754px;top:196.5px;width:6px;height:0.8px;background:#777;"></div>
<div class="ln" style="top:164.90px">1</div>
<div class="code" style="top:164.90px"><span class="cm"># <span style="font-size:7.1px"><k>本</k><k>程</k><k>序</k><k>计</k><k>算</k><k>小</k><k>球</k><k>向</k><k>上</k><k>斜</k><k>抛</k><k>在</k><k>不</k><k>同</k><k>时</k><k>间</k><k>点</k><k>的</k><k>高</k><k>度</k></span></span></div>
<div class="ln" style="top:174.76px">2</div>
<div class="code" style="top:174.76px">theta = <span class="kw">int</span>(<span class="kw">input</span>())  <span class="cm"># <span style="font-size:7.1px"><k>单</k><k>位</k><k>：</k><k>角</k><k>度</k></span></span></div>
<div class="ln" style="top:184.62px">3</div>
<div class="code" style="top:184.62px"><span class="cm">#   <span style="font-size:7.1px"><k>请</k><k>在</k><k>此</k><k>添</k><k>加</k><k>实</k><k>现</k><k>代</k><k>码</k></span>   #</span></div>
<div class="ln" style="top:194.48px">4</div>
<div class="code" style="top:194.48px"><span class="cm"># ********** Begin *********#</span></div>
<div class="ln" style="top:204.34px">5</div>
<div class="code" style="top:204.34px"><span class="cm"># <span style="font-size:7.1px"><k>导</k><k>入</k></span>math<span style="font-size:7.1px"><k>库</k><k>以</k><k>及</k><k>所</k><k>需</k><k>函</k><k>数</k></span></span></div>
<div class="ln" style="top:214.20px">6</div>
<div class="code" style="top:214.20px"><span class="kw">from</span> math <span class="kw">import</span> tan, cos, pi</div>
<div class="ln" style="top:224.06px">7</div>
<div class="code" style="top:224.06px"><span class="cm"># <span style="font-size:7.1px"><k>参</k><k>数</k><k>赋</k><k>值</k></span></span></div>
<div class="ln" style="top:233.92px">8</div>
<div class="code" style="top:233.92px">g = 9.8     <span class="cm"># <span style="font-size:7.1px"><k>米</k></span>/<span style="font-size:7.1px"><k>秒</k></span>**2</span></div>
<div class="ln" style="top:243.78px">9</div>
<div class="code" style="top:243.78px">v0 = 25     <span class="cm"># <span style="font-size:7.1px"><k>千</k><k>米</k></span>/<span style="font-size:7.1px"><k>小</k><k>时</k></span></span></div>
<div class="ln" style="top:253.64px">10</div>
<div class="code" style="top:253.64px">y0 = 1      <span class="cm"># <span style="font-size:7.1px"><k>米</k></span></span></div>
<div class="ln" style="top:263.50px">11</div>
<div class="code" style="top:263.50px">x = 0.5     <span class="cm"># <span style="font-size:7.1px"><k>米</k></span></span></div>
<div class="ln" style="top:273.36px">12</div>
<div class="code" style="top:273.36px"><span class="cm"># <span style="font-size:7.1px"><k>单</k><k>位</k><k>换</k><k>算</k></span></span></div>
<div class="ln" style="top:283.22px">13</div>
<div class="code" style="top:283.22px">v0 = v0/3.6 <span class="cm"># <span style="font-size:7.1px"><k>将</k><k>千</k><k>米</k></span>/<span style="font-size:7.1px"><k>小</k><k>时</k><k>换</k><k>算</k><k>成</k><k>米</k></span>/<span style="font-size:7.1px"><k>秒</k></span></span></div>
<div class="ln" style="top:293.08px">14</div>
<div class="code" style="top:293.08px">theta = theta/180*pi  <span class="cm"># <span style="font-size:7.1px"><k>将</k><k>角</k><k>度</k><k>换</k><k>算</k><k>成</k><k>弧</k><k>度</k><k>（</k><k>注</k><k>意</k></span>cos<span style="font-size:7.1px"><k>函</k><k>数</k><k>的</k><k>参</k><k>数</k><k>为</k><k>弧</k><k>度</k><k>单</k><k>位</k><k>）</k></span></span></div>
<div class="ln" style="top:302.94px">15</div>
<div class="code" style="top:302.94px"><span class="cm"># <span style="font-size:7.1px"><k>计</k><k>算</k></span>y<span style="font-size:7.1px"><k>值</k></span></span></div>
<div class="ln" style="top:312.80px">16</div>
<div class="code" style="top:312.80px">y = x*tan(theta) - 1/(2*v0**2)*g*x**2/(cos(theta)**2)+y0</div>
<div class="ln" style="top:322.66px">17</div>
<div class="code" style="top:322.66px"><span class="cm"># <span style="font-size:7.1px"><k>格</k><k>式</k><k>化</k><k>输</k><k>出</k></span></span></div>
<div class="ln" style="top:332.52px">18</div>
<div class="code" style="top:332.52px"><span class="kw">print</span>(<span class="st">"y<span style="font-size:7.1px"><k>值</k><k>计</k><k>算</k><k>结</k><k>果</k><k>为</k><k>：</k></span>%.5f<span style="font-size:7.1px"><k>米</k></span>"</span> % y)</div>
<div class="ln" style="top:342.38px">19</div>
<div class="code" style="top:342.38px"><span class="cm"># ********** End **********#</span></div>
<div class="a" style="left:307px;top:222px;width:405px;height:0.8px;background:#2c2c2c;"></div>
<div class="a" style="left:307px;top:231px;width:405px;height:0.8px;background:#2c2c2c;"></div>
<div class="a" style="left:384px;top:223px;width:0.8px;height:8px;background:#d8d8d8;"></div>
<div class="a" style="left:307px;top:379px;width:456px;height:77px;background:#131b24;"></div>
<div class="a" style="left:307px;top:378.5px;width:456px;height:0.8px;background:#263a4d;"></div>
<svg style="left:536px;top:374.5px" width="11" height="8" viewBox="0 0 11 8"><path d="M5.5 0L8.5 2.6H2.5Z M5.5 8L8.5 5.4H2.5Z" fill="#3b9cf0"/><rect x="0" y="3.5" width="11" height="1" fill="#3b9cf0"/></svg>
<div class="t" style="left:330px;top:384.5px;font-size:5.8px;color:#e6e9ec;"><k>测</k><k>试</k><k>结</k><k>果</k></div>
<div class="a" style="left:336px;top:393.5px;width:9px;height:1px;background:#2bb597;"></div>
<div class="t" style="left:374px;top:384.5px;font-size:5.8px;color:#d0d4d8;"><k>自</k><k>测</k><k>运</k><k>行</k><k>结</k><k>果</k></div>
<svg style="left:742px;top:382px" width="8" height="8" viewBox="0 0 8 8"><path d="M4.8 0.8H7.2V3.2M7.2 0.8L4.6 3.4M3.2 7.2H0.8V4.8M0.8 7.2L3.4 4.6" stroke="#55606b" fill="none" stroke-width="0.8"/></svg>
<svg style="left:315.5px;top:400.5px" width="7" height="7" viewBox="0 0 7 7"><circle cx="3.5" cy="3.5" r="3.5" fill="#28bd7c"/><path d="M1.8 3.6L3 4.8L5.3 2.4" stroke="#131b24" fill="none" stroke-width="0.9"/></svg>
<div class="t" style="left:325px;top:400.3px;font-size:7.2px;color:#28bd7c;">4/4</div>
<div class="t" style="left:343px;top:401px;font-size:6.2px;color:#28bd7c;"><k>全</k><k>部</k><k>通</k><k>过</k></div>
<div class="a" style="left:315px;top:416px;width:439px;height:17px;background:#1e2d3a;"></div>
<svg style="left:324px;top:422px" width="4" height="5" viewBox="0 0 4 5"><path d="M0 0L4 2.5L0 5Z" fill="#dfe3e7"/></svg>
<div class="t" style="left:332px;top:421.5px;font-size:6px;color:#dfe3e7;"><k>测</k><k>试</k><k>集</k>1</div>
<div class="t" style="left:629px;top:422.2px;font-size:5px;color:#6b7885;"><k>消</k><k>耗</k><k>内</k><k>存</k>26.04MB</div>
<div class="t" style="left:677px;top:422.2px;font-size:5px;color:#6b7885;"><k>代</k><k>码</k><k>执</k><k>行</k><k>时</k><k>长</k><k>：</k>0.05<k>秒</k></div>
<svg style="left:738px;top:421px" width="7" height="7" viewBox="0 0 7 7"><circle cx="3.5" cy="3.5" r="3.5" fill="#28bd7c"/><path d="M1.8 3.6L3 4.8L5.3 2.4" stroke="#1f2d3b" fill="none" stroke-width="0.9"/></svg>
<div class="a" style="left:315px;top:437.5px;width:439px;height:17px;background:#1e2d3a;"></div>
<svg style="left:324px;top:443.5px" width="4" height="5" viewBox="0 0 4 5"><path d="M0 0L4 2.5L0 5Z" fill="#dfe3e7"/></svg>
<div class="t" style="left:332px;top:443.0px;font-size:6px;color:#dfe3e7;"><k>测</k><k>试</k><k>集</k>2</div>
<div class="t" style="left:629px;top:443.7px;font-size:5px;color:#6b7885;"><k>消</k><k>耗</k><k>内</k><k>存</k>26.04MB</div>
<div class="t" style="left:677px;top:443.7px;font-size:5px;color:#6b7885;"><k>代</k><k>码</k><k>执</k><k>行</k><k>时</k><k>长</k><k>：</k>0.05<k>秒</k></div>
<svg style="left:738px;top:442.5px" width="7" height="7" viewBox="0 0 7 7"><circle cx="3.5" cy="3.5" r="3.5" fill="#28bd7c"/><path d="M1.8 3.6L3 4.8L5.3 2.4" stroke="#1f2d3b" fill="none" stroke-width="0.9"/></svg>
<div class="a" style="left:307px;top:456px;width:456px;height:23px;background:#070d15;"></div>
<div class="a" style="left:761px;top:145px;width:2.2px;height:310.5px;background:#b4b4b4;"></div>
<div class="a" style="left:761px;top:350px;width:2.2px;height:28px;background:#d6d6d6;"></div>
<div class="t" style="left:314px;top:464px;font-size:5.2px;color:#75808b;letter-spacing:0.2px;--ls:0.2px"><k>本</k><k>关</k><k>最</k><k>大</k><k>执</k><k>行</k><k>时</k><k>间</k><k>：</k>2<k>秒</k>    <k>本</k><k>次</k><k>评</k><k>测</k><k>耗</k><k>时</k><k>（</k><k>编</k><k>译</k><k>、</k><k>运</k><k>行</k><k>总</k><k>时</k><k>间</k><k>）</k><k>：</k>1.279 <k>秒</k></div>
<div class="a" style="left:645px;top:460.5px;width:31.5px;height:13.5px;background:transparent;border:1px solid #2d4a66;border-radius:1px"></div>
<div class="t" style="left:652px;top:464px;font-size:5.8px;color:#7fb0e0;"><k>上</k><k>一</k><k>关</k></div>
<div class="a" style="left:680px;top:460.5px;width:38.5px;height:13.5px;background:transparent;border:1px solid #2d4a66;border-radius:1px"></div>
<div class="t" style="left:684px;top:464px;font-size:6.5px;color:#9ac6f0;"><k>自</k><k>测</k><k>运</k><k>行</k></div>
<div class="a" style="left:722.5px;top:460.5px;width:34.5px;height:13.5px;background:#3a9cf2;border-radius:1px"></div>
<svg style="left:727px;top:463.5px" width="8" height="8" viewBox="0 0 8 8"><circle cx="4" cy="4" r="3.4" stroke="#fff" fill="none" stroke-width="0.8"/><path d="M3 2.4L5.5 4L3 5.6Z" fill="#fff"/></svg>
<div class="t" style="left:737px;top:464px;font-size:6.3px;color:#ffffff;"><k>评</k><k>测</k></div>
<div class="a" style="left:0px;top:479px;width:763px;height:19.5px;background:#d9d9d9;"></div>
<div class="a" style="left:0px;top:479px;width:26px;height:19.5px;background:#cdcdcd;"></div>
<svg style="left:8.5px;top:485px;transform:scale(0.8);transform-origin:0 0" width="10" height="9" viewBox="0 0 10 9"><path d="M0 1.2L4.3 0.6V4.2H0Z M4.8 0.5L10 0V4.2H4.8Z M0 4.8H4.3V8.4L0 7.8Z M4.8 4.8H10V9L4.8 8.5Z" fill="#111"/></svg>
<div class="a" style="left:26px;top:479px;width:77px;height:19.5px;background:#e8e8e8;"></div>
<div class="a" style="left:26px;top:497px;width:77px;height:1.5px;background:#e4a869;"></div>
<svg style="left:31.5px;top:483px" width="11" height="11" viewBox="0 0 11 11"><circle cx="5.5" cy="5.5" r="5.5" fill="#db4437"/><path d="M5.5 5.5L0.7 8.2A5.5 5.5 0 0 0 8.3 10.2Z" fill="#0f9d58"/><path d="M5.5 5.5L8.3 10.2A5.5 5.5 0 0 0 10.2 2.6Z" fill="#f4b400"/><circle cx="5.5" cy="5.5" r="2.6" fill="#fff"/><circle cx="5.5" cy="5.5" r="2" fill="#4285f4"/></svg>
<div class="t" style="left:44px;top:485.5px;font-size:6.4px;color:#1a1a1a;">Python <k>计</k><k>算</k><k>思</k><k>维</k>...</div>
<svg style="left:110px;top:483px" width="12" height="12" viewBox="0 0 12 12"><circle cx="5" cy="4.5" r="3.8" stroke="#e05050" fill="none" stroke-width="0.8" stroke-dasharray="1 0.6"/><path d="M4 5L7 11M8 5L5 11" stroke="#2b62c4" stroke-width="1.1"/></svg>
<svg style="left:134px;top:482.5px" width="10" height="12" viewBox="0 0 10 12"><rect x="0.5" y="0.5" width="9" height="11" fill="#3f5f7c" stroke="#2b3e52" stroke-width="0.6"/><rect x="1.8" y="1.6" width="6.4" height="2.2" fill="#cfe3f3"/><path d="M2 5.5H8M2 7.5H8M2 9.5H8" stroke="#b8ccdc" stroke-width="1"/></svg>
<svg style="left:158px;top:483px" width="12" height="11" viewBox="0 0 12 11"><path d="M2 3L10 1L11.5 9L3.5 11Z" fill="#9ec9ea"/><path d="M2 3L10 1L10.4 2.6L2.4 4.6Z" fill="#5b8fbf"/></svg>
<div class="a" style="left:177px;top:479px;width:77.5px;height:19.5px;background:#f8ad6c;"></div>
<svg style="left:183px;top:483.5px" width="12" height="10" viewBox="0 0 12 10"><ellipse cx="4.6" cy="4" rx="4.4" ry="3.8" fill="#3cb04a"/><ellipse cx="8" cy="6.6" rx="3.8" ry="3.1" fill="#f2f2f2" stroke="#bbb" stroke-width="0.4"/></svg>
<div class="t" style="left:196px;top:485.5px;font-size:6.8px;color:#1a1a1a;"><k>微</k><k>信</k></div>
<div class="a" style="left:256px;top:479px;width:72px;height:19.5px;background:linear-gradient(90deg,#d2d2d2,#dcdcdc 60%,#efe5d8);"></div>
<div class="a" style="left:256px;top:497px;width:72px;height:1.5px;background:#9a8a78;"></div>
<svg style="left:260px;top:483.5px" width="12" height="10" viewBox="0 0 12 10"><ellipse cx="4.6" cy="4" rx="4.4" ry="3.8" fill="#3cb04a"/><ellipse cx="8" cy="6.6" rx="3.8" ry="3.1" fill="#f2f2f2" stroke="#bbb" stroke-width="0.4"/></svg>
<div class="t" style="left:273px;top:485.5px;font-size:6.8px;color:#1a1a1a;"><k>微</k><k>信</k></div>
<svg style="left:336px;top:482.5px" width="13" height="12" viewBox="0 0 13 12"><ellipse cx="6" cy="7" rx="5.5" ry="4.5" fill="#d8d8c8" stroke="#888" stroke-width="0.5"/><circle cx="4" cy="6" r="1" fill="#e44"/><circle cx="6.5" cy="5" r="1" fill="#44e"/><circle cx="8" cy="8" r="1" fill="#4a4"/><path d="M9 7L12.5 0.5" stroke="#555" stroke-width="1"/></svg>
<div class="a" style="left:359px;top:479px;width:71px;height:19.5px;background:#dcdcdc;"></div>
<div class="a" style="left:359px;top:497px;width:71px;height:1.5px;background:#c9b39c;"></div>
<svg style="left:363.5px;top:482.5px" width="9" height="12" viewBox="0 0 9 12"><path d="M1 2.5L4.5 0.5L8.5 2.5V9.5L4.5 11.5L1 9.5Z" fill="#3a8ee6"/><path d="M4.5 0.5L8.5 2.5V9.5L4.5 11.5Z" fill="#62b0f5"/></svg>
<div class="t" style="left:376px;top:485.5px;font-size:6.6px;color:#1a1a1a;"><k>特</k><k>色</k> - search-ms...</div>
<div class="a" style="left:432px;top:479px;width:73px;height:19.5px;background:#dcdcdc;"></div>
<div class="a" style="left:432px;top:497px;width:73px;height:1.5px;background:#c9b39c;"></div>
<svg style="left:436px;top:482.5px" width="12" height="12" viewBox="0 0 12 12"><path d="M0.5 1.5H3.5L6 7L8.5 1.5H11.5L7.5 10H4.5Z" fill="none" stroke="#e0433a" stroke-width="1.2"/><rect x="6" y="6" width="5.5" height="5.5" fill="#fff" stroke="#e0433a" stroke-width="0.8"/></svg>
<div class="t" style="left:450px;top:485.5px;font-size:6.6px;color:#1a1a1a;"><k>头</k><k>歌</k><k>特</k><k>色</k><k>化</k><k>教</k><k>学</k>...</div>
<div class="a" style="left:511px;top:479px;width:72.5px;height:19.5px;background:#d9d9d9;"></div>
<div class="a" style="left:511px;top:497px;width:72.5px;height:1.5px;background:#e4a869;"></div>
<svg style="left:515px;top:483px" width="11" height="11" viewBox="0 0 11 11"><rect width="11" height="11" rx="2" fill="#2a6ae8"/><path d="M1.8 7.5Q3.5 3 5.5 5.5Q7.5 3 9.2 7.5" stroke="#fff" fill="none" stroke-width="1.3"/></svg>
<div class="t" style="left:529px;top:485.5px;font-size:6.6px;color:#1a1a1a;"><k>腾</k><k>讯</k><k>会</k><k>议</k></div>
<svg style="left:589.5px;top:486px" width="7" height="5" viewBox="0 0 7 5"><path d="M0.5 4.5L3.5 1L6.5 4.5" stroke="#222" fill="none" stroke-width="0.9"/></svg>
<svg style="left:603px;top:483px" width="5" height="11" viewBox="0 0 5 11"><rect x="1" y="0" width="3" height="6.5" rx="1.5" fill="#222"/><path d="M2.5 7V10.5M0.8 10.5H4.2" stroke="#222" stroke-width="0.9"/></svg>
<svg style="left:611px;top:483px" width="10" height="11" viewBox="0 0 10 11"><ellipse cx="5" cy="5.5" rx="4" ry="5" fill="#222"/><ellipse cx="5" cy="6.5" rx="3" ry="3.3" fill="#f5f5f5"/><ellipse cx="5" cy="8.5" rx="4.8" ry="1.6" fill="#e53"/><circle cx="8" cy="2.5" r="2" fill="#f5a623"/></svg>
<svg style="left:624px;top:485px" width="11" height="7" viewBox="0 0 11 7"><rect x="0.5" y="0.5" width="9" height="6" fill="#333" stroke="#222" stroke-width="0.6"/><rect x="9.5" y="2" width="1.5" height="3" fill="#222"/></svg>
<svg style="left:650px;top:484px" width="10" height="9" viewBox="0 0 10 9"><path d="M1 3.5Q5 0 9 3.5M2.5 5.2Q5 3 7.5 5.2M4 6.8Q5 6 6 6.8" stroke="#333" fill="none" stroke-width="0.8"/><path d="M1 8.5L8.5 1" stroke="#333" stroke-width="0.6"/></svg>
<svg style="left:661px;top:484px" width="9" height="9" viewBox="0 0 9 9"><path d="M0.5 3H2.5L5 0.8V8.2L2.5 6H0.5Z" fill="#333"/><path d="M6.3 2.5Q7.6 4.5 6.3 6.5M7.5 1.5Q9.5 4.5 7.5 7.5" stroke="#333" fill="none" stroke-width="0.6"/></svg>
<svg style="left:673px;top:483.5px" width="10" height="10" viewBox="0 0 10 10"><rect x="1" y="1" width="8" height="6" fill="none" stroke="#555" stroke-width="0.9"/><path d="M0.5 9.5H9.5M1 1L9 7M9 1L1 7" stroke="#555" stroke-width="0.7"/></svg>
<svg style="left:685.5px;top:483.5px" width="10" height="10" viewBox="0 0 10 10"><circle cx="5" cy="5" r="4.8" fill="#f26522"/><text x="5" y="8" font-size="8" font-weight="bold" text-anchor="middle" fill="#fff" font-family="Liberation Sans">S</text></svg>
<div class="t" style="left:710.5px;top:480.5px;font-size:6.6px;color:#222;">15:02</div>
<div class="t" style="left:703.5px;top:489.5px;font-size:6.6px;color:#222;">2022/4/11</div>
<svg style="left:742.5px;top:483.5px" width="10" height="10" viewBox="0 0 10 10"><path d="M0.5 0.5H8.5V5.5L6 8.5H0.5Z" fill="none" stroke="#333" stroke-width="0.8"/><path d="M6 8.5V5.5H8.5" fill="none" stroke="#333" stroke-width="0.6"/></svg>
<div class="a" style="left:760px;top:479px;width:3px;height:19.5px;background:#d0d0d0;"></div>
<div class="a" style="left:0px;top:0px;width:1px;height:571px;background:#1f242b;"></div>
<div class="a" style="left:0px;top:556px;width:93px;height:14.5px;background:#141414;"></div>
<svg style="left:1.5px;top:558.5px" width="9" height="9" viewBox="0 0 9 9"><rect x="0.5" y="0.5" width="8" height="5.5" rx="0.6" fill="#f5f5f5"/><path d="M2.5 8.2H6.5" stroke="#f5f5f5" stroke-width="1"/><path d="M3.2 4.3L5.8 1.7M4.3 1.6H5.9V3.2" stroke="#141414" fill="none" stroke-width="0.7"/></svg>
<svg style="left:11.5px;top:557.5px" width="8" height="11" viewBox="0 0 8 11"><rect x="2.2" y="0.5" width="3.6" height="6.2" rx="1.8" fill="#37c25a"/><path d="M0.8 4.8Q0.8 8.2 4 8.2Q7.2 8.2 7.2 4.8" stroke="#f0f0f0" fill="none" stroke-width="0.9"/><path d="M4 8.2V10.5" stroke="#f0f0f0" stroke-width="0.9"/></svg>
<div class="t" style="left:20.5px;top:559.3px;font-size:10px;color:#ffffff;"><k>尹</k><k>刚</k><k>的</k><k>屏</k><k>幕</k><k>共</k><k>享</k></div>
<div class="a" style="left:0px;top:571px;width:928px;height:1.2px;background:#f0f0f0;"></div>
<div class="a" style="left:30px;top:572.2px;width:212px;height:1.8px;background:#d6d6d6;"></div>
<div class="a" style="left:763px;top:0px;width:165px;height:571px;background:linear-gradient(90deg,#5b5f62 0%,#404447 18%,#202224 55%,#0c0c0c 85%,#000 100%);"></div>
<div class="a" style="left:763px;top:0px;width:5.5px;height:571px;background:#53575a;"></div>
<div class="a" style="left:761.5px;top:0px;width:1.5px;height:70px;background:#3c4043;"></div>
<div class="a" style="left:761.5px;top:499px;width:1.5px;height:72px;background:#3c4043;"></div>
<div class="a" style="left:926.5px;top:0px;width:1.5px;height:574px;background:#e6e6e6;"></div>
<div class="a" style="left:768px;top:11.5px;width:154px;height:86px;background:#232427;border:1px solid #3e6d5b"></div>
<div class="a" style="left:769.5px;top:83.0px;width:74px;height:13.5px;background:#151515;"></div>
<svg style="left:772px;top:85.5px" width="9" height="9" viewBox="0 0 9 9"><rect x="0.5" y="0.5" width="8" height="5.5" rx="0.6" fill="#f5f5f5"/><path d="M2.5 8.2H6.5" stroke="#f5f5f5" stroke-width="1"/><path d="M3.2 4.3L5.8 1.7M4.3 1.6H5.9V3.2" stroke="#151515" fill="none" stroke-width="0.7"/></svg>
<svg style="left:783px;top:84.5px" width="8" height="11" viewBox="0 0 8 11"><rect x="2.2" y="0.5" width="3.6" height="6.2" rx="1.8" fill="#37c25a"/><path d="M0.8 4.8Q0.8 8.2 4 8.2Q7.2 8.2 7.2 4.8" stroke="#f0f0f0" fill="none" stroke-width="0.9"/><path d="M4 8.2V10.5" stroke="#f0f0f0" stroke-width="0.9"/></svg>
<div class="t" style="left:793px;top:87.0px;font-size:6.5px;color:#f0f0f0;"><k>尹</k><k>刚</k>(<k>湖</k><k>南</k><k>大</k><k>学</k>)</div>
<div class="a" style="left:768px;top:104px;width:154px;height:85px;background:#232427;border:1px solid #3a3c3f"></div>
<div class="a" style="left:769.5px;top:174.5px;width:38px;height:13.5px;background:#151515;"></div>
<svg style="left:772px;top:176.5px" width="9" height="10" viewBox="0 0 9 10"><rect x="2.7" y="0.5" width="3.6" height="5.6" rx="1.8" fill="#f0f0f0"/><path d="M1 4.6Q1 7.6 4.5 7.6Q8 7.6 8 4.6" stroke="#f0f0f0" fill="none" stroke-width="0.9"/><path d="M4.5 7.6V9.6" stroke="#f0f0f0" stroke-width="0.9"/><path d="M0.8 9L8.4 0.8" stroke="#e5503c" stroke-width="1.1"/></svg>
<div class="t" style="left:783px;top:178.5px;font-size:6.5px;color:#f0f0f0;"><k>解</k><k>宇</k><k>琳</k></div>
<div class="a" style="left:768px;top:195.7px;width:154px;height:85px;background:#232427;border:1px solid #3a3c3f"></div>
<div class="a" style="left:769.5px;top:266.2px;width:13.5px;height:13.5px;background:#e8892f;"></div>
<svg style="left:771.5px;top:268.2px" width="9" height="9" viewBox="0 0 9 9"><circle cx="4.5" cy="3" r="2.2" fill="#fff"/><path d="M0.5 9Q0.5 5.8 4.5 5.8Q8.5 5.8 8.5 9Z" fill="#fff"/></svg>
<div class="a" style="left:783px;top:266.2px;width:37px;height:13.5px;background:#151515;"></div>
<svg style="left:786px;top:268.2px" width="9" height="10" viewBox="0 0 9 10"><rect x="2.7" y="0.5" width="3.6" height="5.6" rx="1.8" fill="#f0f0f0"/><path d="M1 4.6Q1 7.6 4.5 7.6Q8 7.6 8 4.6" stroke="#f0f0f0" fill="none" stroke-width="0.9"/><path d="M4.5 7.6V9.6" stroke="#f0f0f0" stroke-width="0.9"/><path d="M0.8 9L8.4 0.8" stroke="#e5503c" stroke-width="1.1"/></svg>
<div class="t" style="left:797px;top:270.2px;font-size:6.5px;color:#f0f0f0;"><k>肖</k><k>光</k><k>泉</k></div>
<div class="a" style="left:768px;top:287.3px;width:154px;height:85px;background:#232427;border:1px solid #3a3c3f"></div>
<div class="a" style="left:769.5px;top:357.8px;width:53px;height:13.5px;background:#151515;"></div>
<svg style="left:772px;top:359.8px" width="9" height="10" viewBox="0 0 9 10"><rect x="2.7" y="0.5" width="3.6" height="5.6" rx="1.8" fill="#f0f0f0"/><path d="M1 4.6Q1 7.6 4.5 7.6Q8 7.6 8 4.6" stroke="#f0f0f0" fill="none" stroke-width="0.9"/><path d="M4.5 7.6V9.6" stroke="#f0f0f0" stroke-width="0.9"/><path d="M0.8 9L8.4 0.8" stroke="#e5503c" stroke-width="1.1"/></svg>
<div class="t" style="left:783px;top:361.8px;font-size:6.5px;color:#f0f0f0;"><k>华</k><k>中</k>-<k>哈</k><k>工</k><k>程</k></div>
<div class="a" style="left:768px;top:378.8px;width:154px;height:85px;background:#232427;border:1px solid #3a3c3f"></div>
<div class="a" style="left:769.5px;top:449.3px;width:38px;height:13.5px;background:#151515;"></div>
<svg style="left:772px;top:451.3px" width="9" height="10" viewBox="0 0 9 10"><rect x="2.7" y="0.5" width="3.6" height="5.6" rx="1.8" fill="#f0f0f0"/><path d="M1 4.6Q1 7.6 4.5 7.6Q8 7.6 8 4.6" stroke="#f0f0f0" fill="none" stroke-width="0.9"/><path d="M4.5 7.6V9.6" stroke="#f0f0f0" stroke-width="0.9"/><path d="M0.8 9L8.4 0.8" stroke="#e5503c" stroke-width="1.1"/></svg>
<div class="t" style="left:783px;top:453.3px;font-size:6.5px;color:#f0f0f0;"><k>周</k><k>海</k><k>洋</k></div>
<div class="a" style="left:768px;top:469.9px;width:154px;height:85px;background:#232427;border:1px solid #3a3c3f"></div>
<div class="a" style="left:769.5px;top:540.4px;width:38px;height:13.5px;background:#151515;"></div>
<svg style="left:772px;top:542.4px" width="9" height="10" viewBox="0 0 9 10"><rect x="2.7" y="0.5" width="3.6" height="5.6" rx="1.8" fill="#f0f0f0"/><path d="M1 4.6Q1 7.6 4.5 7.6Q8 7.6 8 4.6" stroke="#f0f0f0" fill="none" stroke-width="0.9"/><path d="M4.5 7.6V9.6" stroke="#f0f0f0" stroke-width="0.9"/><path d="M0.8 9L8.4 0.8" stroke="#e5503c" stroke-width="1.1"/></svg>
<div class="t" style="left:783px;top:544.4px;font-size:6.5px;color:#f0f0f0;"><k>王</k><k>丽</k><k>凤</k></div>
<svg style="left:824px;top:29.5px" width="42" height="42" viewBox="0 0 42 42"><defs><clipPath id="c1"><circle cx="21" cy="21" r="21"/></clipPath></defs><g clip-path="url(#c1)"><rect width="42" height="42" fill="#3a2f24"/><path d="M6 34V16Q6 5 16 3L17 6Q10 9 10 18V34Z" fill="#cdb584"/><path d="M36 34V16Q36 5 26 3L25 6Q32 9 32 18V34Z" fill="#c6ad7c"/><rect x="2" y="14" width="3" height="20" fill="#6b5a40"/><ellipse cx="21" cy="19.5" rx="7.5" ry="9" fill="#b99474"/><path d="M12.5 18Q11 6 21 6Q31 6 29.5 18Q28 11 21 11.5Q14 11 12.5 18Z" fill="#17130f"/><path d="M0 42V34Q6 29 14 28Q21 32 28 28Q36 29 42 34V42Z" fill="#34405c"/><path d="M14 31L19 42H9Z" fill="#4f5d78"/><path d="M27 31L33 42H24Z" fill="#5d6a82"/><path d="M17 28L21 31L25 28Z" fill="#e8e8e8"/></g></svg>
<svg style="left:824px;top:121px" width="42" height="42" viewBox="0 0 42 42"><defs><clipPath id="c2"><circle cx="21" cy="21" r="21"/></clipPath></defs><g clip-path="url(#c2)"><rect width="42" height="42" fill="#dcdadf"/><rect x="4" y="10" width="8" height="22" fill="#e8b5a5"/><path d="M10 36Q9 8 22 6Q32 6 32 20L30 28Q24 22 20 26L16 38Z" fill="#3a3634"/><ellipse cx="26" cy="20" rx="6" ry="7" fill="#f1e9e6"/><path d="M14 42L20 28Q28 26 38 32L42 42Z" fill="#f3f3f6"/><path d="M22 28L28 31L34 28L38 32L30 34Z" fill="#3d6fbf"/></g></svg>
<svg style="left:824px;top:213px" width="42" height="42" viewBox="0 0 42 42"><defs><clipPath id="c3"><circle cx="21" cy="21" r="21"/></clipPath></defs><g clip-path="url(#c3)"><rect width="42" height="42" fill="#a8261a"/><ellipse cx="21" cy="16" rx="7.5" ry="9.5" fill="#e0b8a0"/><path d="M13 13Q12 5 21 5Q30 5 29 13Q26 8 21 9Q16 9 13 13Z" fill="#3a2a24"/><path d="M17 24H25V30H17Z" fill="#d8ad95"/><path d="M6 42Q8 30 15 28Q21 36 27 28Q34 30 36 42Z" fill="#121010"/><path d="M6 42Q7 32 12 30L14 42Z" fill="#d8ad95"/><path d="M36 42Q35 32 30 30L28 42Z" fill="#d8ad95"/></g></svg>
<svg style="left:824px;top:304px" width="42" height="42" viewBox="0 0 42 42"><defs><clipPath id="c4"><circle cx="21" cy="21" r="21"/></clipPath></defs><g clip-path="url(#c4)"><rect width="42" height="42" fill="#6f8ea4"/><rect x="0" y="12" width="42" height="12" fill="#5d7f99"/><rect x="4" y="14" width="34" height="2" fill="#9fb6c6"/><rect x="5" y="22" width="8" height="7" fill="#dfe5ec"/><rect x="3" y="12" width="1.5" height="20" fill="#c9d3dc"/><ellipse cx="22" cy="11" rx="3.5" ry="4.5" fill="#2c3744"/><path d="M15 42V22Q15 17 22 17Q29 17 29 22V42Z" fill="#4c7196"/><rect x="30" y="14" width="12" height="28" fill="#8a9aa6"/></g></svg>
<svg style="left:824px;top:396px" width="42" height="42" viewBox="0 0 42 42"><defs><clipPath id="c5"><circle cx="21" cy="21" r="21"/></clipPath></defs><g clip-path="url(#c5)"><rect width="42" height="42" fill="#5b8fd6"/><path d="M0 0H18Q14 8 16 14Q8 12 0 18Z" fill="#e9eef5"/><ellipse cx="8" cy="15" rx="9" ry="6" fill="#6e5236"/><rect x="5" y="18" width="3" height="20" fill="#5a4630"/><ellipse cx="35" cy="12" rx="10" ry="7" fill="#7a5c3c"/><rect x="33" y="16" width="3" height="24" fill="#5a4630"/><path d="M0 34Q10 28 20 30Q30 28 42 34V42H0Z" fill="#8a7360"/><path d="M4 42Q12 33 20 36Q30 34 40 42Z" fill="#6f5a48"/></g></svg>
<svg style="left:824px;top:488px" width="42" height="42" viewBox="0 0 42 42"><defs><clipPath id="c6"><circle cx="21" cy="21" r="21"/></clipPath></defs><g clip-path="url(#c6)"><rect width="42" height="42" fill="#3d78d0"/><path d="M0 12Q14 10 30 18Q36 20 42 18V26H0Z" fill="#e8edf3"/><path d="M0 22Q20 20 42 24V30H0Z" fill="#5b6f94"/><path d="M0 28H42V42H0Z" fill="#3e4a3a"/><path d="M20 30Q26 18 34 20Q42 22 42 30V36H20Z" fill="#a89478"/><path d="M0 36Q20 32 42 35V42H0Z" fill="#6b8f3a"/><path d="M4 32Q10 28 16 32L14 36H4Z" fill="#8e8070"/></g></svg>
</body></html>
